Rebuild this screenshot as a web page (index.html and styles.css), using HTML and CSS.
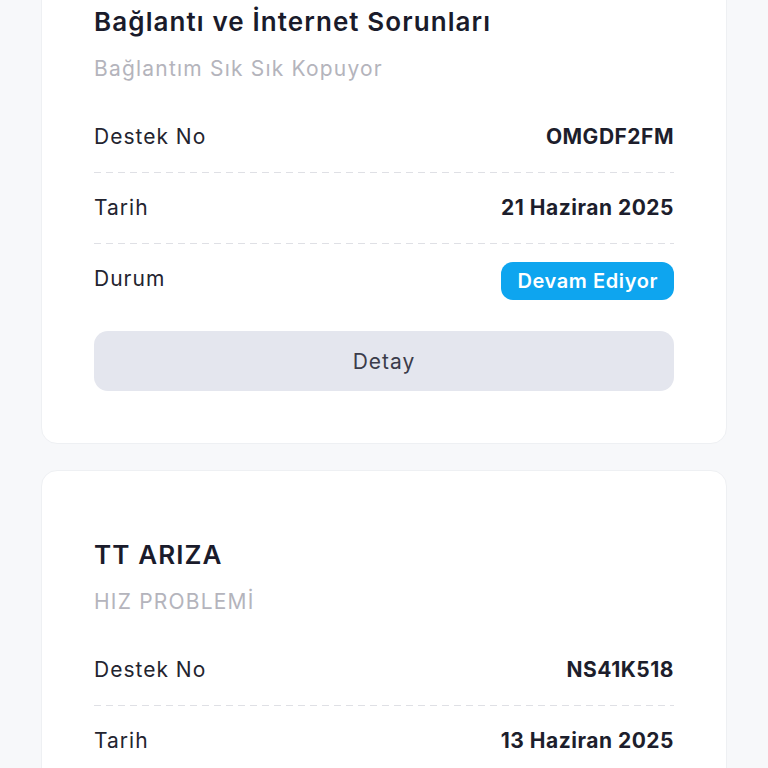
FILE: index.html
```html
<!DOCTYPE html>
<html lang="tr">
<head>
<meta charset="utf-8">
<link rel="stylesheet" href="styles.css">
</head>
<body>
<main class="list">
  <section class="card">
    <h2 class="title">Bağlantı ve İnternet Sorunları</h2>
    <p class="subtitle">Bağlantım Sık Sık Kopuyor</p>
    <div class="row"><span class="label">Destek No</span><span class="value">OMGDF2FM</span></div>
    <div class="row"><span class="label">Tarih</span><span class="value">21 Haziran 2025</span></div>
    <div class="row last"><span class="label">Durum</span><span class="badge">Devam Ediyor</span></div>
    <button class="detail">Detay</button>
  </section>
  <section class="card">
    <h2 class="title">TT ARIZA</h2>
    <p class="subtitle">HIZ PROBLEMİ</p>
    <div class="row"><span class="label">Destek No</span><span class="value">NS41K518</span></div>
    <div class="row"><span class="label">Tarih</span><span class="value">13 Haziran 2025</span></div>
    <div class="row last"><span class="label">Durum</span><span class="badge">Devam Ediyor</span></div>
    <button class="detail">Detay</button>
  </section>
</main>
</body>
</html>
```
FILE: styles.css
```css
html, body {
  margin: 0;
  padding: 0;
  background: #f7f8fa;
  overflow: hidden;
}
body {
  font-family: "Inter", "Noto Sans", sans-serif;
  color: #1d1e2c;
}
.list {
  display: flex;
  flex-direction: column;
  gap: 26px;
  padding: 0 41px;
  margin-top: -63px;
}
.card {
  background: #ffffff;
  border: 1px solid #eef0f3;
  border-radius: 16px;
  padding: 66px 52px 52px;
  display: flex;
  flex-direction: column;
}
.title {
  margin: 0;
  font-size: 26px;
  line-height: 36px;
  font-weight: 600;
  letter-spacing: 1.1px;
  color: #1a1b2b;
}
.subtitle {
  margin: 14px 0 18px;
  font-size: 21px;
  line-height: 30px;
  letter-spacing: 1.2px;
  color: #b4b4bc;
}
.row {
  position: relative;
  height: 70px;
  display: flex;
  align-items: center;
  justify-content: space-between;
  font-size: 21px;
  line-height: 30px;
  border-bottom: 1px solid transparent;
  background-image: repeating-linear-gradient(90deg, #dfe0e5 0 7px, transparent 7px 12px);
  background-size: 100% 1px;
  background-repeat: no-repeat;
  background-position: left bottom;
  background-origin: border-box;
}
.row.last {
  background-image: none;
  border-bottom: none;
}
.label {
  color: #23242f;
  letter-spacing: 1px;
}
.value {
  font-weight: 700;
  letter-spacing: 0.5px;
  color: #1d1e2c;
}
.badge {
  background: #0ea5ef;
  color: #ffffff;
  font-weight: 600;
  font-size: 20px;
  line-height: 38px;
  letter-spacing: 0.6px;
  padding: 0 16px;
  border-radius: 12px;
  margin-top: 4px;
}
.detail {
  margin-top: 17px;
  height: 60px;
  border: none;
  border-radius: 14px;
  background: #e4e6ee;
  color: #3b3c4a;
  font-family: inherit;
  font-size: 21px;
  letter-spacing: 1px;
}
```
